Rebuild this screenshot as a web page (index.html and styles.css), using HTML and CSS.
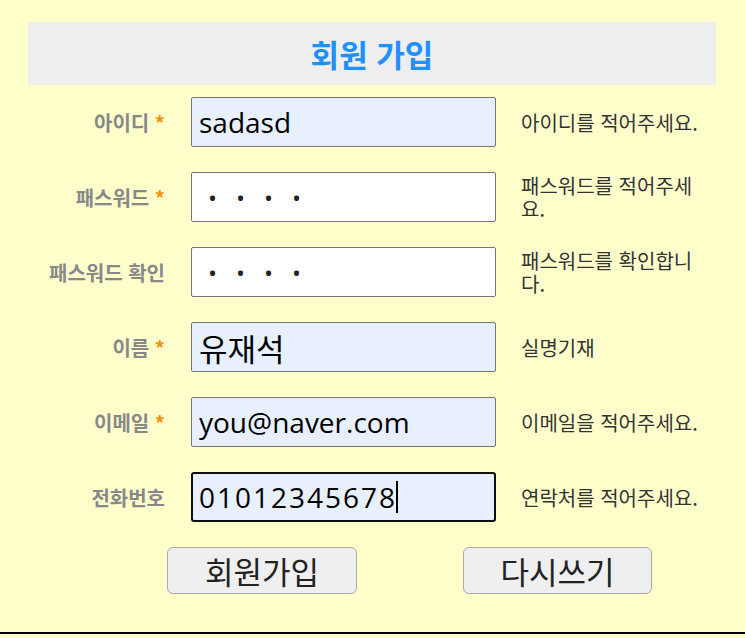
FILE: index.html
```html
<!DOCTYPE html>
<html lang="ko">
<head>
<meta charset="utf-8">
<title>회원 가입</title>
<link rel="stylesheet" href="styles.css">
</head>
<body>
<div class="page">
  <form class="join">
    <h1 class="title">회원 가입</h1>
    <div class="rows">
      <div class="row">
        <label class="label">아이디 <span class="req">*</span></label>
        <input class="field filled" type="text" value="sadasd">
        <p class="help">아이디를 적어주세요.</p>
      </div>
      <div class="row">
        <label class="label">패스워드 <span class="req">*</span></label>
        <div class="field pw"><span>•</span><span>•</span><span>•</span><span>•</span></div>
        <p class="help">패스워드를 적어주세요.</p>
      </div>
      <div class="row">
        <label class="label">패스워드 확인</label>
        <div class="field pw"><span>•</span><span>•</span><span>•</span><span>•</span></div>
        <p class="help">패스워드를 확인합니다.</p>
      </div>
      <div class="row">
        <label class="label">이름 <span class="req">*</span></label>
        <input class="field filled ko" type="text" value="유재석">
        <p class="help">실명기재</p>
      </div>
      <div class="row">
        <label class="label">이메일 <span class="req">*</span></label>
        <input class="field filled" type="text" value="you@naver.com">
        <p class="help">이메일을 적어주세요.</p>
      </div>
      <div class="row">
        <label class="label">전화번호</label>
        <div class="field filled focus digits">01012345678<span class="caret"></span></div>
        <p class="help">연락처를 적어주세요.</p>
      </div>
    </div>
    <div class="buttons">
      <button type="button" class="btn btn-submit">회원가입</button>
      <button type="button" class="btn btn-reset">다시쓰기</button>
    </div>
  </form>
</div>
</body>
</html>
```
FILE: styles.css
```css
* { box-sizing: border-box; }
html, body { margin: 0; padding: 0; }
body {
  background: #ffffcc;
  font-family: "Open Sans", "Noto Sans CJK KR", sans-serif;
  width: 745px;
  height: 638px;
  overflow: hidden;
}
.page {
  height: 634px;
  border-bottom: 2px solid #000;
  padding: 22px 29px 0 28px;
}
.join { margin: 0; }
.title {
  margin: 0;
  height: 63px;
  background: #eeeeee;
  color: #1e90ff;
  font-family: "Noto Sans CJK KR", sans-serif;
  font-size: 31px;
  font-weight: 700;
  line-height: 63px;
  text-align: center;
}
.rows {
  display: flex;
  flex-direction: column;
  gap: 25px;
  margin-top: 12px;
}
.row {
  display: grid;
  grid-template-columns: 138px 305px 192px;
  column-gap: 25px;
  align-items: center;
  height: 50px;
}
.label {
  text-align: right;
  font-family: "Noto Sans CJK KR", sans-serif;
  font-size: 20px;
  font-weight: 700;
  color: #888888;
  white-space: nowrap;
  margin-right: 1px;
}
.req { color: #ff8c00; }
.field {
  display: flex;
  align-items: center;
  width: 305px;
  height: 50px;
  margin: 0;
  padding: 0 7px;
  border: 1px solid #767676;
  border-radius: 2px;
  background: #ffffff;
  font-family: "Open Sans", "Noto Sans CJK KR", sans-serif;
  font-size: 28px;
  color: #000;
  outline: none;
}
.filled { background: #e8f0fe; }
.ko { font-family: "Noto Sans CJK KR", sans-serif; font-size: 31px; }
.digits { letter-spacing: 2px; }
.focus {
  border: 2px solid #101010;
  border-radius: 3px;
  padding: 0 6px;
}
.caret {
  display: inline-block;
  width: 2px;
  height: 32px;
  background: #000;
  margin-left: -1px;
}
.pw { padding-left: 16px; gap: 0; }
.pw span {
  width: 28px;
  font-size: 24px;
  color: #222;
}
.help {
  margin: 0;
  font-family: "Noto Sans CJK KR", sans-serif;
  font-size: 20px;
  line-height: 23px;
  color: #333333;
}
.buttons {
  display: flex;
  gap: 106px;
  margin: 25px 0 0 139px;
}
.btn {
  width: 190px;
  height: 47px;
  background: #efefef;
  border: 1px solid #aaaaaa;
  border-radius: 6px;
  font-family: "Noto Sans CJK KR", sans-serif;
  font-size: 31px;
  color: #222;
  padding: 0;
}
.btn-reset { width: 189px; }
```
